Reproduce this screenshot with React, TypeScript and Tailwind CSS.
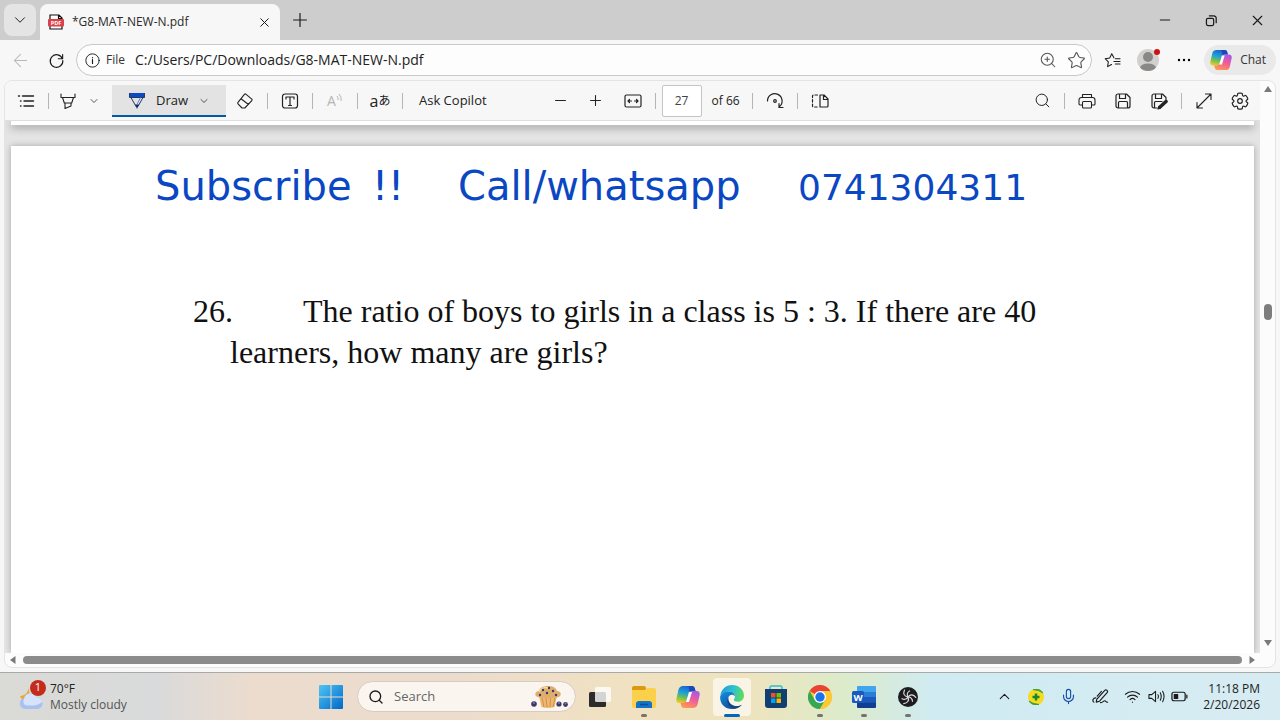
import type { ReactNode } from "react"
import { ArrowLeft, ChevronDown, ChevronUp, Minus, Mic, Plus, Search, Star, Wifi, X, ZoomIn } from "lucide-react"

const font = "font-['Segoe_UI','Open_Sans',sans-serif]"

function IconButton({ label, className = "w-8", children }: { label: string; className?: string; children: ReactNode }) {
  return (
    <button type="button" aria-label={label} className={`flex h-8 shrink-0 items-center justify-center ${className}`}>
      {children}
    </button>
  )
}

function Separator() {
  return <span className="mx-1.5 h-4 w-px shrink-0 bg-[#b5b5b5]" />
}

function Glyph({ children, size = 18, width = 1.1 }: { children: ReactNode; size?: number; width?: number }) {
  return (
    <svg
      width={size}
      height={size}
      viewBox="0 0 18 18"
      fill="none"
      stroke="currentColor"
      strokeWidth={width}
      strokeLinecap="round"
      strokeLinejoin="round"
      aria-hidden="true"
    >
      {children}
    </svg>
  )
}

function CopilotLogo({ id, size }: { id: string; size: number }) {
  return (
    <svg width={size} height={size} viewBox="0 0 24 24" aria-hidden="true">
      <defs>
        <linearGradient id={`${id}-a`} x1="0.6" y1="0" x2="0.3" y2="1">
          <stop offset="0" stopColor="#1b5fd0" />
          <stop offset="0.4" stopColor="#1c9fd8" />
          <stop offset="0.7" stopColor="#6cc05a" />
          <stop offset="1" stopColor="#f2c81c" />
        </linearGradient>
        <linearGradient id={`${id}-b`} x1="0.7" y1="0" x2="0.3" y2="1">
          <stop offset="0" stopColor="#a45be8" />
          <stop offset="0.45" stopColor="#ee5a9c" />
          <stop offset="1" stopColor="#ff9a52" />
        </linearGradient>
      </defs>
      <path d="M7 1h9c1.500 0 2.300 1 2.700 2.300L19.500 6h-3c-1.600 0-2.600.8-3.100 2.400l-2.300 7.300C10.600 17.300 9.600 18 8 18H3.500C1 18 0 16.500.3 14.300L2.500 4.500C3.200 2.200 4.800 1 7 1z" fill={`url(#${id}-a)`} />
      <path d="M12.500 1h3.800c1.300 0 2.100 1 2.500 2.300L19.500 6h-3c-1.300 0-2.200.6-2.800 1.700z" fill="#1a49b8" />
      <path d="M17 23H8c-1.500 0-2.300-1-2.700-2.300L4.500 18h3c1.600 0 2.600-.8 3.100-2.400l2.300-7.300C13.400 6.700 14.400 6 16 6h4.500C23 6 24 7.500 23.700 9.700l-2.200 9.800C20.800 21.800 19.200 23 17 23z" fill={`url(#${id}-b)`} />
      <path d="M13 7h3l-3 10h-3z" fill="#fff" />
    </svg>
  )
}

function TabStrip() {
  return (
    <header className="flex h-10 shrink-0 items-end bg-[#cdcdcd]">
      <button type="button" aria-label="Tab actions" className="mx-1 mb-1 flex size-8 items-center justify-center rounded-lg bg-[#e4e4e4]">
        <ChevronDown size={18} strokeWidth={1.3} />
      </button>
      <div className="flex h-9 w-60 items-center rounded-t-lg bg-[#f7f7f7] pr-2 pl-2">
        <svg width="16" height="16" viewBox="0 0 16 16" className="shrink-0" aria-hidden="true">
          <path d="M2 5V1h9l3 3v1M2 11v4h12v-4M10.500 1v3.500H14" fill="#fff" stroke="#111" strokeWidth="1.200" />
          <rect x="0" y="5" width="16" height="7.500" rx="1" fill="#dc4048" />
          <text x="8" y="11" textAnchor="middle" fontSize="5.500" fontWeight="700" fill="#fff" fontFamily="Open Sans, sans-serif">PDF</text>
        </svg>
        <span className="ml-2 grow text-xs text-[#2a2a2a]">*G8-MAT-NEW-N.pdf</span>
        <button type="button" aria-label="Close tab" className="flex size-4 items-center justify-center">
          <X size={15} strokeWidth={1.6} />
        </button>
      </div>
      <button type="button" aria-label="New tab" className="mb-1 ml-1 flex size-8 items-center justify-center">
        <Plus size={22} strokeWidth={1.3} />
      </button>
      <div className="mb-1 ml-auto flex">
        <IconButton label="Minimize" className="w-[46px]">
          <Minus size={16} strokeWidth={1.6} />
        </IconButton>
        <IconButton label="Restore" className="w-[46px]">
          <Glyph size={13} width={1.7}>
            <rect x="2" y="6" width="10" height="10" rx="2" />
            <path d="M6 2.500h6a3.500 3.500 0 0 1 3.500 3.500v6" />
          </Glyph>
        </IconButton>
        <IconButton label="Close" className="w-[46px]">
          <X size={17} strokeWidth={1.6} />
        </IconButton>
      </div>
    </header>
  )
}

function AddressBar() {
  return (
    <nav className="flex h-10 shrink-0 items-center gap-1 bg-[#f7f7f7] pr-1 pl-1">
      <IconButton label="Back" className="w-8 text-[#b8b8b8]">
        <ArrowLeft size={21} strokeWidth={1.2} />
      </IconButton>
      <IconButton label="Refresh">
        <Glyph size={17} width={1.200}>
          <path d="M15.300 7.200A6.700 6.700 0 1 0 15.700 9M15.500 2.600v4.600h-4.600" />
        </Glyph>
      </IconButton>
      <div className="flex h-8 grow items-center rounded-full border border-[#c9c9c9] bg-[#fdfdfd] pr-px pl-2">
        <Glyph size={15}>
          <circle cx="9" cy="9" r="8" />
          <path d="M9 8v4.500M9 5.500v.3" strokeWidth="1.400" />
        </Glyph>
        <label htmlFor="url" className="ml-1.5 text-xs text-[#333]">File</label>
        <input id="url" readOnly value="C:/Users/PC/Downloads/G8-MAT-NEW-N.pdf" className="ml-2.5 grow bg-transparent text-sm text-[#222] outline-none" />
        <IconButton label="Zoom" className="w-7 text-[#555]">
          <ZoomIn size={18} strokeWidth={1.4} />
        </IconButton>
        <IconButton label="Add to favorites" className="w-7 text-[#555]">
          <Star size={19} strokeWidth={1.4} />
        </IconButton>
      </div>
      <IconButton label="Favorites">
        <Glyph size={17}>
          <path d="M10.500 6.200 8.200 1.800 6 6.300l-4.800.8L4.600 10.500l-.8 5 4.200-2.300M12 7.200h5M10.500 10h6.500M12 12.800h5" />
        </Glyph>
      </IconButton>
      <IconButton label="Profile">
        <svg width="26" height="26" viewBox="0 0 26 26" aria-hidden="true">
          <defs>
            <clipPath id="avatar">
              <circle cx="13" cy="13" r="11" />
            </clipPath>
          </defs>
          <circle cx="13" cy="13" r="11" fill="#d2d0ce" />
          <g clipPath="url(#avatar)" fill="#8a8886">
            <circle cx="13" cy="10" r="5" />
            <ellipse cx="13" cy="21" rx="8" ry="4.500" />
          </g>
          <circle cx="22" cy="5" r="3" fill="#d01010" />
        </svg>
      </IconButton>
      <IconButton label="Settings and more">
        <svg width="16" height="16" viewBox="0 0 16 16" aria-hidden="true">
          <circle cx="3" cy="8" r="1.200" />
          <circle cx="8" cy="8" r="1.200" />
          <circle cx="13" cy="8" r="1.200" />
        </svg>
      </IconButton>
      <button type="button" className="flex h-[30px] items-center gap-2 rounded-full bg-[#e9e9e9] pr-2.5 pl-1.5 text-xs text-[#333]">
        <CopilotLogo id="chat" size={22} />
        Chat
      </button>
    </nav>
  )
}

function PdfToolbar() {
  return (
    <div className="flex h-10 shrink-0 items-center border-b border-[#dedede] bg-[#f7f7f7] pr-1 pl-[5px] text-[#222]">
      <IconButton label="Contents">
        <Glyph width={1.400}>
          <path d="M5.500 4h11M7 9h9.500M7 14h9.500M1.500 4h1M3.500 9h.5M3.500 14h.5" />
        </Glyph>
      </IconButton>
      <Separator />
      <IconButton label="Highlight" className="w-[26px]">
        <Glyph>
          <path d="M2 2v3.500h14V2M3.500 5.500l1.800 5.500h7.400l1.800-5.500M6 11v5.500l6-2.500v-3" />
        </Glyph>
      </IconButton>
      <IconButton label="Highlight options" className="w-[26px]">
        <ChevronDown size={12} strokeWidth={1.500} />
      </IconButton>
      <button type="button" className="ml-[5px] flex h-8 w-[114px] shrink-0 items-center border-b-2 border-[#005a9e] bg-[#e3e3e3] px-4 pt-0.5 text-[13px]">
        <svg width="18" height="18" viewBox="0 0 18 18" aria-hidden="true">
          <path d="M1.500 1h15v4.500h-15z" fill="#0b4bc4" />
          <path d="M1.500 1v4.500h15V1M3 5.500l5 9h2l5-9" fill="none" stroke="#26385e" />
          <path d="m12.500 5.500-3.500 7" stroke="#5a86d8" fill="none" />
          <path d="M7 12.500h4L9 17z" fill="#0b2e75" />
        </svg>
        <span className="mx-2.5 grow text-left">Draw</span>
        <ChevronDown size={12} strokeWidth={1.500} />
      </button>
      <IconButton label="Erase" className="ml-[3px] w-8">
        <Glyph>
          <path d="m9.800 2.200 6 5a1 1 0 0 1 0 1.400l-7 7.400H6l-4-4.200a1 1 0 0 1 0-1.400l6.400-8a1 1 0 0 1 1.400-.2zM5 6.800l7.500 5.700" />
        </Glyph>
      </IconButton>
      <Separator />
      <IconButton label="Add text">
        <Glyph width={1.200}>
          <rect x="1.500" y="2" width="15" height="14" rx="2.500" />
          <path d="M5 7V5h8v2M9 5v8.500M7.500 13.500h3" />
        </Glyph>
      </IconButton>
      <Separator />
      <button type="button" aria-label="Read aloud" className="flex h-8 w-8 items-center justify-center text-[#b5b5b5]">
        <span className="text-sm">A</span>
        <svg width="7" height="12" viewBox="0 0 7 12" fill="none" stroke="currentColor" className="mb-1" aria-hidden="true">
          <path d="M1 3q1.500 1.500 1 4M3 1q3 2.500 2 7" />
        </svg>
      </button>
      <Separator />
      <button type="button" aria-label="Translate" className="flex h-8 w-8 items-center justify-center font-['Open_Sans','Noto_Sans_CJK_JP',sans-serif] whitespace-nowrap">
        <span className="text-base leading-4">a</span>
        <span className="text-xs leading-4">あ</span>
      </button>
      <Separator />
      <button type="button" className="h-8 shrink-0 px-2.5 text-[13px]">Ask Copilot</button>
      <div className="ml-12 flex items-center">
        <IconButton label="Zoom out" className="mr-[3px] w-8">
          <Minus size={17} strokeWidth={1.500} />
        </IconButton>
        <IconButton label="Zoom in" className="mr-[5px] w-8">
          <Plus size={17} strokeWidth={1.500} />
        </IconButton>
        <IconButton label="Fit to width">
          <Glyph width={1.200}>
            <rect x="1" y="3" width="16" height="12" rx="1.500" />
            <path d="M4 9h3.500M14 9h-3.500M5.500 7.500 4 9l1.500 1.500M12.500 7.500 14 9l-1.500 1.500" />
          </Glyph>
        </IconButton>
        <Separator />
        <input aria-label="Page number" defaultValue="27" className="h-8 w-10 rounded-xs border border-[#c4c4c4] bg-white text-center text-xs text-[#444]" />
        <span className="w-11 pl-2.5 text-xs whitespace-nowrap">of 66</span>
        <Separator />
        <IconButton label="Rotate">
          <Glyph width={1.200}>
            <path d="M1.500 9a7.300 7.300 0 1 1 12 5.600M13 11.500v4h4" />
            <circle cx="9" cy="9" r="1.300" />
          </Glyph>
        </IconButton>
        <Separator />
        <IconButton label="Page view">
          <Glyph width={1.200}>
            <path d="M6.500 3h-4a1 1 0 0 0-1 1v10a1 1 0 0 0 1 1h4" strokeDasharray="2.500 2" />
            <path d="M9 3h4l4 4v7a1 1 0 0 1-1 1H9zM12.500 3v4.500h4.500" />
          </Glyph>
        </IconButton>
      </div>
      <div className="ml-auto flex items-center">
        <IconButton label="Find">
          <Search size={17} strokeWidth={1.400} />
        </IconButton>
        <Separator />
        <IconButton label="Print" className="mr-1 w-8">
          <Glyph>
            <path d="M4.500 5.500V2.500h9v3M4.500 13h-2.500a1 1 0 0 1-1-1V8a2.500 2.500 0 0 1 2.500-2.500h11A2.500 2.500 0 0 1 17 8v4a1 1 0 0 1-1 1h-2.500" />
            <rect x="4.500" y="9.500" width="9" height="6.500" rx="1" />
          </Glyph>
        </IconButton>
        <IconButton label="Save" className="mr-1 w-8">
          <Glyph width={1.200}>
            <path d="M4 2h8.500L16 5.500V14a2 2 0 0 1-2 2H4a2 2 0 0 1-2-2V4a2 2 0 0 1 2-2zM5.500 2v4.500h6V2M4.500 16v-5.500a1 1 0 0 1 1-1h7a1 1 0 0 1 1 1V16" />
          </Glyph>
        </IconButton>
        <IconButton label="Save as">
          <Glyph width={1.200}>
            <path d="M7 16H4a2 2 0 0 1-2-2V4a2 2 0 0 1 2-2h8.500L16 5.500V8M5.500 2v4.500h6V2M4.500 16v-5.500a1 1 0 0 1 1-1H12" />
            <path d="m10 15 6-5.500" strokeWidth="3.500" />
            <path d="m8 17 .8-2.500 1.700 1.700z" fill="currentColor" />
          </Glyph>
        </IconButton>
        <Separator />
        <IconButton label="Full screen" className="mr-1 w-8">
          <Glyph>
            <path d="m2 16 14-14M10.500 2H16v5.500M2 10.500V16h5.500" />
          </Glyph>
        </IconButton>
        <IconButton label="Settings">
          <svg width="20" height="20" viewBox="0 0 24 24" fill="none" stroke="currentColor" strokeWidth="1.400" aria-hidden="true">
            <path d="M12.010 2.500c.74 0 1.470.08 2.180.25.31.07.55.33.58.65l.17 1.420a1.390 1.390 0 0 0 1.930 1.110l1.400-.61c.29-.13.63-.06.85.17a9.800 9.800 0 0 1 2.200 3.790c.1.300 0 .63-.27.82l-1.240.92a1.380 1.380 0 0 0 0 2.220l1.250.92c.26.190.36.52.27.82a9.800 9.800 0 0 1-2.200 3.800c-.22.230-.56.3-.85.170l-1.410-.62a1.390 1.390 0 0 0-1.930 1.120l-.17 1.420c-.03.310-.26.570-.57.650a9.500 9.500 0 0 1-4.400 0 .75.75 0 0 1-.58-.65l-.17-1.420a1.390 1.390 0 0 0-1.920-1.110l-1.410.61a.75.75 0 0 1-.85-.17 9.800 9.800 0 0 1-2.200-3.800c-.1-.3 0-.63.27-.82l1.240-.92a1.380 1.380 0 0 0 0-2.220l-1.240-.92a.75.75 0 0 1-.27-.82 9.800 9.800 0 0 1 2.200-3.800c.22-.23.56-.3.85-.17l1.400.62a1.390 1.390 0 0 0 1.930-1.120l.17-1.420c.04-.32.27-.58.58-.65.720-.16 1.450-.24 2.210-.24z" />
            <circle cx="12" cy="12" r="2.800" />
          </svg>
        </IconButton>
      </div>
    </div>
  )
}

function Document() {
  return (
    <main className="flex min-h-0 grow flex-col overflow-hidden bg-[#e4e4e4] px-[6px]">
      <div className="h-1 shrink-0 bg-white shadow-[0_2px_8px_#0007]" />
      <article className="mt-[21px] min-h-0 grow bg-white shadow-[0_0_6px_#0004]">
        <p className="flex items-baseline pt-3 pl-36 font-['Segoe_Print','DejaVu_Sans',sans-serif] text-[40px] leading-[56px] whitespace-nowrap text-[#0a47c2]">
          <span className="w-[217px] shrink-0">Subscribe</span>
          <span className="w-[86px] shrink-0">!!</span>
          <span className="w-[340px] shrink-0">Call/whatsapp</span>
          <span className="text-4xl">0741304311</span>
        </p>
        <p className="mt-[77px] pr-40 pl-[219px] -indent-[37px] font-['Liberation_Serif',serif] text-[32px] leading-[41px] text-[#111]">
          <span className="inline-block w-[110px] indent-0">26.</span>
          The ratio of boys to girls in a class is 5 : 3. If there are 40 learners, how many are girls?
        </p>
      </article>
    </main>
  )
}

function Arrow({ d }: { d: string }) {
  return (
    <svg width="8" height="8" viewBox="0 0 8 8" fill="#7a7a7a" className="shrink-0" aria-hidden="true">
      <path d={d} />
    </svg>
  )
}

function Viewer() {
  return (
    <section className="flex min-h-0 grow bg-[#f7f7f7] px-1 pb-1">
      <div className="flex min-h-0 grow overflow-hidden rounded-lg border border-[#e4e4e4] bg-[#fcfcfc]">
        <div className="flex min-w-0 grow flex-col">
          <PdfToolbar />
          <Document />
          <div className="flex h-3.5 shrink-0 items-center gap-1.5 px-1">
            <Arrow d="M6.500 0v8L1 4z" />
            <div className="h-2 grow rounded-full bg-[#8b8b8b]" />
            <Arrow d="M1.500 0v8L7 4z" />
          </div>
        </div>
        <div className="flex w-[15px] shrink-0 flex-col items-center justify-between pt-1 pb-5">
          <Arrow d="M0 7h8L4 1z" />
          <div className="mb-[108px] h-4 w-2 rounded-full bg-[#7d7d7d]" />
          <Arrow d="M0 1h8L4 7z" />
        </div>
      </div>
    </section>
  )
}

const apps: { name: string; open?: boolean; active?: boolean; icon: ReactNode }[] = [
  {
    name: "Task view",
    icon: (
      <>
        <rect x="1" y="7" width="17" height="15" rx="1.500" fill="#2c2c2c" />
        <rect x="7" y="2" width="16" height="15" rx="1.500" fill="#fff" opacity="0.8" />
      </>
    ),
  },
  {
    name: "File Explorer",
    open: true,
    icon: (
      <>
        <path d="M0 3a2 2 0 0 1 2-2h10a2 2 0 0 1 2 2v3H0z" fill="#d99a10" />
        <path d="M0 5h13l2-2h7a2 2 0 0 1 2 2v16a2 2 0 0 1-2 2H2a2 2 0 0 1-2-2z" fill="#fcd04a" />
        <path d="M4 23v-4a3 3 0 0 1 3-3h10a3 3 0 0 1 3 3v4z" fill="#1173c9" />
        <path d="M8 19.500h8" stroke="#0a4d91" strokeWidth="1.500" />
      </>
    ),
  },
  { name: "Copilot", icon: <CopilotLogo id="task" size={24} /> },
  {
    name: "Edge",
    open: true,
    active: true,
    icon: (
      <>
        <defs>
          <linearGradient id="edge-top" x1="0" y1="0.4" x2="1" y2="0.6">
            <stop offset="0" stopColor="#1b9de2" />
            <stop offset="0.5" stopColor="#2bc3cf" />
            <stop offset="1" stopColor="#63dc55" />
          </linearGradient>
          <linearGradient id="edge-side" x1="0" y1="0" x2="0.7" y2="1">
            <stop offset="0" stopColor="#168fe0" />
            <stop offset="1" stopColor="#0b4a97" />
          </linearGradient>
        </defs>
        <path d="M.3 11C1 4.500 5.800 0 12 0c7 0 12 5 12 10.500 0 4-3 6.300-6.200 6.300-2.600 0-4-1-4-2 0-.8 1.200-1.300 1.200-3.200C15 9 12.500 6.500 9 6.500 4.500 6.500 1 9 .3 11z" fill="url(#edge-top)" />
        <path d="M.2 11.500C1.200 8.300 4.500 6.300 9 6.400c3.300.1 5.700 2 6 4.800-.7-1-2-1.700-3.500-1.500-2.700.3-3.800 2.800-3 5.600 1 3.500 4.500 6 8.500 6 2 0 3.700-.8 4.800-1.600C20 22.500 16.300 24 12 24 5 24-.5 18.500.2 11.500z" fill="url(#edge-side)" />
        <path d="M8.400 12.500c-1.200 5 3.600 9.500 9 8.700 1.700-.2 3.100-.8 4.400-1.500-1.600 1.700-4 3.300-7 3.800C9 23 5.400 17 8.400 12.500z" fill="#12457f" />
      </>
    ),
  },
  {
    name: "Microsoft Store",
    icon: (
      <>
        <path d="M6 6V2.500A1.500 1.500 0 0 1 7.500 1h9A1.500 1.500 0 0 1 18 2.500V6" fill="none" stroke="#2ac0d8" strokeWidth="1.500" />
        <path d="M1 4h22v16a3 3 0 0 1-3 3H4a3 3 0 0 1-3-3z" fill="#123f73" />
        <path d="M7 8h4.500v4.500H7z" fill="#f25022" />
        <path d="M12.500 8H17v4.500h-4.500z" fill="#7fba00" />
        <path d="M7 13.500h4.500V18H7z" fill="#00a4ef" />
        <path d="M12.500 13.500H17V18h-4.500z" fill="#ffb900" />
      </>
    ),
  },
  {
    name: "Chrome",
    open: true,
    icon: (
      <>
        <circle cx="12" cy="12" r="12" fill="#fcc934" />
        <path d="M12 12 1.600 6A12 12 0 0 1 22.400 6H12z" fill="#ea4335" />
        <path d="M1.600 6A12 12 0 0 0 12 24l5.200-9L12 12 6.800 15z" fill="#34a853" />
        <path d="M12 6h10.400A12 12 0 0 1 12 24l5.200-9z" fill="#fcc934" />
        <circle cx="12" cy="12" r="6" fill="#fff" />
        <circle cx="12" cy="12" r="4.700" fill="#1a73e8" />
      </>
    ),
  },
  {
    name: "Word",
    open: true,
    icon: (
      <>
        <rect x="5" y="1" width="19" height="22" rx="1.500" fill="#2b7cd3" />
        <path d="M6.500 1h16A1.500 1.500 0 0 1 24 2.500V7H5V2.500A1.500 1.500 0 0 1 6.500 1z" fill="#41a5ee" />
        <path d="M5 12h19v5.500H5z" fill="#185abd" />
        <path d="M5 17.500h19v4a1.500 1.500 0 0 1-1.500 1.500h-16A1.500 1.500 0 0 1 5 21.500z" fill="#103f91" />
        <rect x="0" y="6" width="12" height="12" rx="1.500" fill="#185abd" />
        <text x="6" y="15.500" textAnchor="middle" fontSize="9.500" fontWeight="700" fill="#fff" fontFamily="Open Sans, sans-serif">W</text>
      </>
    ),
  },
  {
    name: "OBS Studio",
    open: true,
    icon: (
      <>
        <circle cx="12" cy="12" r="10" fill="#1d1d1f" />
        <g fill="none" stroke="#d9d9d9" strokeWidth="1.200" strokeLinecap="round">
          <path id="obs-arm" d="M12 12C8 11.500 7 8.500 8.500 5M12 12c-1.500-2.500-.5-5 1.500-6" />
          <use href="#obs-arm" transform="rotate(120 12 12)" />
          <use href="#obs-arm" transform="rotate(240 12 12)" />
        </g>
      </>
    ),
  },
]

function Muffin() {
  return (
    <svg width="38" height="24" viewBox="0 0 38 24" aria-hidden="true">
      <path d="M8 11h18l-2.500 11q-6.500 2-13 0z" fill="#eeb871" />
      <path d="m11 13 2 9M15 13l1 9M19.500 13l-.5 9M24 13l-2 9" stroke="#c98540" strokeWidth="0.800" />
      <path d="M5 11c-2-3 1-5 3-5 1-4 5-5 9-5s8 1 9 5c3 0 5 3 3 5-2 3-21 3-24 0z" fill="#dfae6c" />
      <path d="M8 7c2-4 6-5 9-4" stroke="#f6dba6" strokeWidth="1.500" fill="none" />
      <g fill="#3d3768">
        <circle cx="12" cy="5" r="1.200" />
        <circle cx="18" cy="3" r="1.200" />
        <circle cx="16" cy="8" r="1.200" />
        <circle cx="22" cy="6" r="1.200" />
        <circle cx="9" cy="10" r="1.200" />
        <circle cx="25" cy="10" r="1.200" />
        <circle cx="3" cy="19" r="2.800" />
        <circle cx="28" cy="19" r="2.600" />
        <circle cx="34.500" cy="19.500" r="2.400" />
      </g>
      <g fill="#7a76b8">
        <circle cx="3" cy="18" r="1" />
        <circle cx="28" cy="18" r="1" />
        <circle cx="34.500" cy="18.500" r="1" />
      </g>
    </svg>
  )
}

function Taskbar() {
  return (
    <footer className="flex h-12 shrink-0 items-center border-t border-[#a9a9a9] bg-[linear-gradient(to_right,#dadbd6,#d9dadb_12%,#ecdccd_20%,#ecdccd_36%,#f0e1c2_48%,#efe3bd_58%,#dcebca_66%,#d0ebf2_73%,#d7ecf2)] pr-5 pl-[18px]">
      <div className="flex w-[295px] shrink-0 items-center">
        <div className="relative">
          <svg width="28" height="30" viewBox="0 0 28 30" aria-hidden="true">
            <path d="M10 5c1 5-3 9-8 9 1 4 6 6 11 3z" fill="#f3a32e" />
            <path d="M7 27a5.500 5.500 0 0 1-1-10.800 7 7 0 0 1 13-1.500A6.300 6.300 0 0 1 20 27z" fill="#a9c1ee" />
            <path d="M7 23a5 5 0 0 1-1-6 7 7 0 0 1 13-1.800c3 0 5 2 5.500 4.500C20 24 13 24 7 23z" fill="#d6e3fb" />
          </svg>
          <span className="absolute -top-0.5 left-3 flex size-4 items-center justify-center rounded-full bg-[#c42b1c] text-[11px] text-white">1</span>
        </div>
        <div className="ml-1 text-xs leading-4">
          <p className="text-[#222]">70°F</p>
          <p className="text-[#555]">Mostly cloudy</p>
        </div>
      </div>
      <button type="button" aria-label="Start" className="mx-1.5 flex size-6 shrink-0 items-center justify-center">
        <svg width="24" height="24" viewBox="0 0 24 24" aria-hidden="true">
          <defs>
            <linearGradient id="win" x1="0" y1="0" x2="1" y2="1">
              <stop offset="0" stopColor="#4fc6f5" />
              <stop offset="1" stopColor="#0067c8" />
            </linearGradient>
          </defs>
          <path d="M0 1a1 1 0 0 1 1-1h10.500v11.500H0zM12.500 0H23a1 1 0 0 1 1 1v10.500H12.500zM0 12.500h11.500V24H1a1 1 0 0 1-1-1zM12.500 12.500H24V23a1 1 0 0 1-1 1H12.500z" fill="url(#win)" />
        </svg>
      </button>
      <label className="ml-2 flex h-[31px] w-[219px] shrink-0 items-center rounded-full border border-[#d8ccc0] bg-[#faf5ef] pr-1.5 pl-2.5">
        <Search size={16} strokeWidth={2} />
        <input aria-label="Search" placeholder="Search" className="ml-2.5 w-0 grow bg-transparent text-[13px] outline-none placeholder:text-[#666]" />
        <Muffin />
      </label>
      <div className="ml-0.5 flex">
        {apps.map((app) => (
          <button
            key={app.name}
            type="button"
            aria-label={app.name}
            className={`relative mx-[3px] flex h-[38px] w-[38px] shrink-0 items-center justify-center rounded-sm ${app.active ? "bg-[#f9f4e6]" : ""}`}
          >
            <svg width="24" height="24" viewBox="0 0 24 24" aria-hidden="true">
              {app.icon}
            </svg>
            {app.open && (
              <span className={`absolute -bottom-px h-[3px] rounded-full ${app.active ? "w-4 bg-[#0067c0]" : "w-1.5 bg-[#77736c]"}`} />
            )}
          </button>
        ))}
      </div>
      <div className="ml-auto flex items-center">
        <IconButton label="Show hidden icons">
          <ChevronUp size={17} strokeWidth={1.500} />
        </IconButton>
        <IconButton label="Security">
          <svg width="16" height="16" viewBox="0 0 16 16" aria-hidden="true">
            <circle cx="8" cy="8" r="8" fill="#f8db1b" />
            <path d="M5 .6A8 8 0 0 1 15 4Q11 1 5 .6zM11 15.400A8 8 0 0 1 1 12q4 3 10 3.400z" fill="#32a13b" stroke="#32a13b" strokeWidth="0.800" />
            <path d="M8 4.500v7M4.500 8h7" stroke="#14863a" strokeWidth="2.500" />
          </svg>
        </IconButton>
        <IconButton label="Microphone" className="w-8 text-[#1450a8]">
          <Mic size={17} strokeWidth={1.600} />
        </IconButton>
        <IconButton label="Pen">
          <Glyph size={17} width={1.200}>
            <path d="M5 12 13.500 2.500a1.700 1.700 0 0 1 2.500 2.300L8 14l-3.500 1zM10 3.500 5.500 8.500M4 10.500c-3 0-4 3-2 4.500M9 15.500c2 .5 3-2 4.500-2s1 2 3 1.500" />
          </Glyph>
        </IconButton>
        <button type="button" aria-label="Network, volume and battery" className="flex h-8 w-[76px] items-center justify-between pr-1 pl-2">
          <Wifi size={17} strokeWidth={1.600} />
          <Glyph size={17}>
            <path d="M1 7v4h3l4 3.500v-11L4 7zM10.500 7q1 2 0 4M13 5q2 4 0 8M15.500 3.500q3 5.500 0 11" />
          </Glyph>
          <Glyph size={17} width={1.300}>
            <rect x="1" y="4.500" width="14" height="9" rx="2" />
            <rect x="3.500" y="7" width="3.500" height="4" fill="currentColor" />
            <path d="M16.800 7.500v3" />
          </Glyph>
        </button>
        <div className="ml-1 w-16 text-right text-xs leading-4 whitespace-nowrap text-[#222]">
          <p>11:18 PM</p>
          <p>2/20/2026</p>
        </div>
      </div>
    </footer>
  )
}

export default function App() {
  return (
    <div className={`flex h-screen flex-col overflow-hidden text-[#1a1a1a] ${font}`}>
      <TabStrip />
      <AddressBar />
      <Viewer />
      <Taskbar />
    </div>
  )
}
